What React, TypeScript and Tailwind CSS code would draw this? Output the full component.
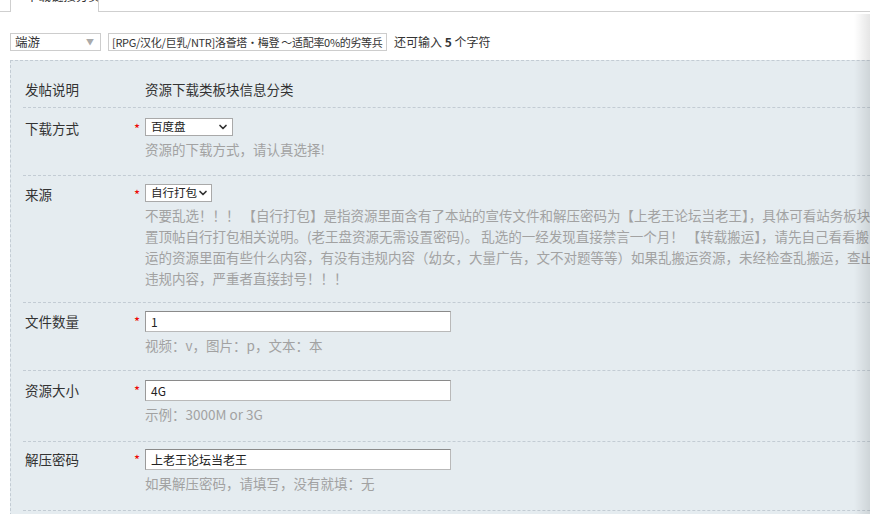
import { ChevronDown } from "lucide-react";

const FONT = { fontFamily: '"Noto Sans CJK SC", "Noto Sans", sans-serif' };

function Dropdown({ value, width }: { value: string; width: string }) {
  return (
    <div
      className={`${width} h-[18px] flex items-center justify-between bg-white border border-[#a9a9a9] pl-[5px] pr-[3px] text-[11.5px] text-[#222] leading-none whitespace-nowrap`}
    >
      <span>{value}</span>
      <ChevronDown size={12} strokeWidth={3.4} className="text-[#333] shrink-0" />
    </div>
  );
}

function TextInput({ value }: { value: string }) {
  return (
    <div className="w-[306px] h-[21px] flex items-center bg-white border border-[#b9b9b9] border-t-[#8a8a8a] border-l-[#9a9a9a] px-[5px] text-[12px] text-[#222] leading-none">
      {value}
    </div>
  );
}

function Row({
  label,
  required,
  height,
  pt,
  children,
}: {
  label: string;
  required?: boolean;
  height: string;
  pt: string;
  children: React.ReactNode;
}) {
  return (
    <div className={`flex ${height} ${pt} border-b border-dashed border-[#c3ccd4]`}>
      <div className="w-[111px] pl-[2px] h-[20px] flex items-center text-[13.5px] text-[#333]">{label}</div>
      <div className="w-[11px] h-[20px] flex items-center text-[13px] text-[#e00] leading-none">
        {required ? "*" : ""}
      </div>
      <div className="flex flex-col items-start">{children}</div>
    </div>
  );
}

function Hint({ children }: { children: React.ReactNode }) {
  return <div className="mt-[3px] text-[13.5px] leading-[21px] text-[#a2a2a2] whitespace-nowrap">{children}</div>;
}

export default function App() {
  return (
    <div className="w-[870px] h-[514px] overflow-hidden relative bg-white" style={FONT}>
      {/* tab bar */}
      <div className="flex h-[12px]">
        <div className="w-[10px] border-b border-[#cfcfcf]" />
        <div className="w-[89px] border-l border-r border-[#cfcfcf] bg-white overflow-hidden">
          <div className="-mt-[13px] pl-[15px] text-[12.5px] leading-[18px] text-[#333] whitespace-nowrap">下载链接分类</div>
        </div>
        <div className="flex-1 border-b border-[#cfcfcf]" />
      </div>

      {/* title row */}
      <div className="flex items-center mt-[21px] ml-[10px] text-[12px]">
        <div className="shrink-0 w-[91px] h-[18px] flex items-center justify-between border border-[#cdcdcd] bg-white pl-[4px] pr-[6px]">
          <span className="text-[#333] text-[12.5px]">端游</span>
          <span className="text-[#aaa] text-[8px]">▼</span>
        </div>
        <div className="shrink-0 ml-[7px] w-[279px] h-[18px] flex items-center border border-[#cdcdcd] bg-white px-[3px] overflow-hidden whitespace-nowrap text-[#333] text-[11px] tracking-[-0.3px]">
          [RPG/汉化/巨乳/NTR]洛薈塔·梅登 ～适配率0%的劣等兵·
        </div>
        <div className="shrink-0 ml-[7px] text-[#333]">
          还可输入 <b className="font-bold">5</b> 个字符
        </div>
      </div>

      {/* info panel */}
      <div className="mt-[9px] ml-[10px] w-[1000px] bg-[#e5ecf0] border-t border-l border-dashed border-[#c3ccd4] pl-[12px] pb-[20px]">
        <div className="flex h-[47px] pt-[18px] border-b border-dashed border-[#c3ccd4] text-[13.5px] text-[#333]">
          <div className="w-[122px] pl-[2px] h-[20px] flex items-center">发帖说明</div>
          <div className="h-[20px] flex items-center">资源下载类板块信息分类</div>
        </div>

        <Row label="下载方式" required height="h-[68px]" pt="pt-[10px]">
          <Dropdown value="百度盘" width="w-[88px]" />
          <Hint>资源的下载方式，请认真选择!</Hint>
        </Row>

        <Row label="来源" required height="h-[127px]" pt="pt-[8px]">
          <Dropdown value="自行打包" width="w-[67px]" />
          <Hint>
            <div>不要乱选！！！ 【自行打包】是指资源里面含有了本站的宣传文件和解压密码为【上老王论坛当老王】，具体可看站务板块</div>
            <div>置顶帖自行打包相关说明。(老王盘资源无需设置密码)。 乱选的一经发现直接禁言一个月！ 【转载搬运】，请先自己看看搬</div>
            <div>运的资源里面有些什么内容，有没有违规内容（幼女，大量广告，文不对题等等）如果乱搬运资源，未经检查乱搬运，查出</div>
            <div>违规内容，严重者直接封号！！！</div>
          </Hint>
        </Row>

        <Row label="文件数量" required height="h-[68px]" pt="pt-[8px]">
          <TextInput value="1" />
          <Hint>视频：v，图片：p，文本：本</Hint>
        </Row>

        <Row label="资源大小" required height="h-[71px]" pt="pt-[9px]">
          <TextInput value="4G" />
          <Hint>示例：3000M or 3G</Hint>
        </Row>

        <Row label="解压密码" required height="h-[69px]" pt="pt-[7px]">
          <TextInput value="上老王论坛当老王" />
          <Hint>如果解压密码，请填写，没有就填：无</Hint>
        </Row>
      </div>

      {/* window edge shadow */}
      <div className="absolute top-[14px] right-0 bottom-0 w-[16px] bg-gradient-to-r from-transparent to-black/10 pointer-events-none" />
    </div>
  );
}
